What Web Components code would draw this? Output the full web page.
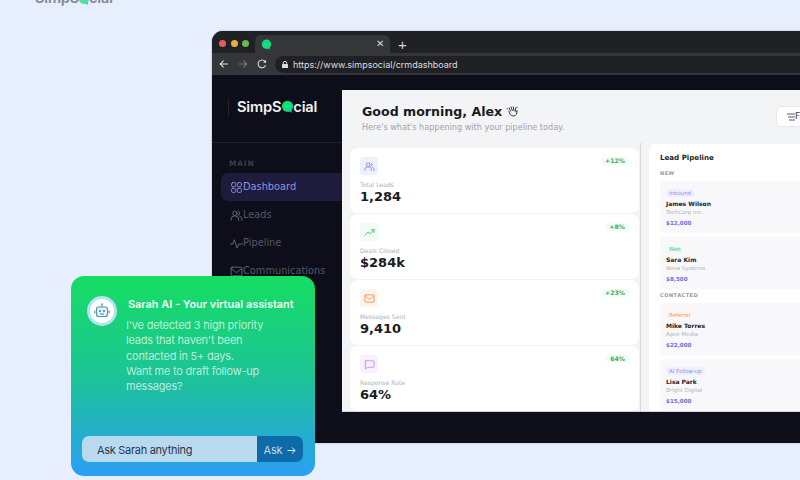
<!DOCTYPE html>
<html lang="en">
<head>
<meta charset="utf-8">
<title>SimpSocial</title>
<style>
  html, body { margin: 0; height: 100%; overflow: hidden; background: #e7eefd; }
  body { font-family: "Inter", "Liberation Sans", sans-serif; }
  .stage { position: relative; width: 800px; height: 480px; overflow: hidden; display: flex; flex-direction: column; }
</style>
</head>
<body>
<div class="stage">
  <top-logo></top-logo>
  <browser-window>
    <app-sidebar></app-sidebar>
    <dash-main></dash-main>
  </browser-window>
  <sarah-widget></sarah-widget>
</div>

<script>
const ICONS = {
  grid: '<rect x="3" y="3" width="7.5" height="7.5" rx="2"/><rect x="13.5" y="3" width="7.5" height="7.5" rx="2"/><rect x="3" y="13.5" width="7.5" height="7.5" rx="2"/><rect x="13.5" y="13.5" width="7.5" height="7.5" rx="2"/>',
  users: '<circle cx="9" cy="8" r="4"/><path d="M2 21v-2a6 6 0 0 1 6-6h2a6 6 0 0 1 6 6v2"/><path d="M15 4.2a4 4 0 0 1 0 7.6"/><path d="M18 13.3a6 6 0 0 1 4 5.7v2"/>',
  pulse: '<path d="M1 13h4l3-8 5 15 3-7h7"/>',
  mail: '<rect x="2" y="4" width="20" height="16" rx="2"/><path d="M2.5 6.5 12 14l9.5-7.5"/>',
  trend: '<path d="M2 18l7-7 4 4 9-9"/><path d="M16 6h6v6"/>',
  chat: '<path d="M4 4h16a2 2 0 0 1 2 2v10a2 2 0 0 1-2 2H8l-5 4V6a2 2 0 0 1 1-2z"/>'
};

function svgIcon(name, size, color, sw) {
  return `<svg width="${size}" height="${size}" viewBox="0 0 24 24" fill="none" stroke="${color}" stroke-width="${sw || 2}" stroke-linecap="round" stroke-linejoin="round">${ICONS[name]}</svg>`;
}

// logo dot used in the tab, the sidebar and the clipped page logo
function bubble(size) {
  return `<svg width="${size}" height="${size}" viewBox="0 0 20 20"><path d="M10 17l7 2.6-1.4-7z" fill="#1d8fe0"/><circle cx="10" cy="9.6" r="8.6" fill="#14d97a"/><path d="M6.5 9.6h1M9.5 9.6h1M12.5 9.6h1" stroke="#c9f7de" stroke-width="1"/></svg>`;
}

class TopLogo extends HTMLElement {
  constructor() {
    super();
    this.attachShadow({mode:'open'});
    this.shadowRoot.innerHTML = `
      <style>
        :host { display: flex; align-items: center; height: 15px; margin: -9px 0 25px 35px; flex: none;
          font: 600 14.6px/15px "Inter", sans-serif; color: #5a5d6c; opacity: .7; letter-spacing: -.2px; }
        svg { margin: 0 -1px; }
      </style>
      SimpS${bubble(12)}cial`;
  }
}
customElements.define('top-logo', TopLogo);

class BrowserWindow extends HTMLElement {
  constructor() {
    super();
    this.attachShadow({mode:'open'});
    this.shadowRoot.innerHTML = `
      <style>
        :host { display: flex; flex-direction: column; flex: none; width: 640px; height: 412px; margin-left: 212px;
          background: #0d0e19; border-radius: 11px 0 0 11px; overflow: hidden; box-shadow: 0 0 2px rgba(30,40,70,.35); }
        .tabs { display: flex; align-items: flex-end; height: 22px; background: #202124; flex: none; }
        .dots { display: flex; gap: 4.5px; width: 43px; box-sizing: border-box; padding: 0 0 6px 7px; }
        .dots i { width: 7px; height: 7px; border-radius: 50%; }
        .tab { display: flex; align-items: center; justify-content: space-between; width: 135px; height: 18px; box-sizing: border-box;
          padding: 0 6px; background: #35363a; border-radius: 6px 6px 0 0; }
        .x { font: 10px/1 "Liberation Sans", sans-serif; color: #d6d7d9; }
        .plus { font: 300 15px/1 "Liberation Sans", sans-serif; color: #d6d7d9; margin: 0 0 1px 8px; }
        .bar { display: flex; align-items: center; height: 22px; background: #35363a; flex: none; padding-left: 7px; gap: 9px; }
        .bar svg { flex: none; }
        .url { display: flex; align-items: center; gap: 5px; flex: 1; height: 17px; background: #202124; border-radius: 9px; padding-left: 7px;
          font: 9px/1 "Inter", sans-serif; color: #dcdde0; margin-left: -1px; }
        .body { display: flex; flex: 1; min-height: 0; }
      </style>
      <div class="tabs">
        <div class="dots"><i style="background:#e2605a"></i><i style="background:#eab03f"></i><i style="background:#62bc50"></i></div>
        <div class="tab">${bubble(11)}<span class="x">✕</span></div>
        <span class="plus">+</span>
      </div>
      <div class="bar">
        <svg width="10" height="10" viewBox="0 0 12 12" fill="none" stroke="#dcdde0" stroke-width="1.3"><path d="M11 6H1.5M5.5 2 1.5 6l4 4"/></svg>
        <svg width="10" height="10" viewBox="0 0 12 12" fill="none" stroke="#77787c" stroke-width="1.3"><path d="M1 6h9.5M6.5 2l4 4-4 4"/></svg>
        <svg width="10" height="10" viewBox="0 0 12 12" fill="none" stroke="#dcdde0" stroke-width="1.3"><path d="M10.4 7.5A4.7 4.7 0 1 1 9.6 2.8L10.6 4"/><path d="M10.9 1v3.6H7.3z" fill="#dcdde0" stroke="none"/></svg>
        <div class="url">
          <svg width="6" height="7" viewBox="0 0 6 7"><rect y="3" width="6" height="4" rx=".6" fill="#dcdde0"/><path d="M1.3 3.2V2a1.7 1.7 0 0 1 3.4 0v1.2" fill="none" stroke="#dcdde0"/></svg>
          https://www.simpsocial/crmdashboard
        </div>
      </div>
      <div class="body"><slot></slot></div>`;
  }
}
customElements.define('browser-window', BrowserWindow);

class AppSidebar extends HTMLElement {
  constructor() {
    super();
    this.attachShadow({mode:'open'});
    const nav = [['grid','Dashboard',1],['users','Leads'],['pulse','Pipeline'],['mail','Communications']];
    this.shadowRoot.innerHTML = `
      <style>
        :host { display: block; flex: none; width: 130px; height: 100%; box-sizing: border-box; padding-top: 15px; overflow: hidden; }
        .brand { display: flex; align-items: center; height: 53px; box-sizing: border-box; padding: 0 0 18px 16px; gap: 8px;
          border-bottom: 1px solid #20212c; font: 600 14.7px/1 "Inter", sans-serif; color: #f1f2f4; letter-spacing: -.2px; }
        .brand b { font-weight: 600; display: flex; align-items: center; }
        .brand svg { margin: 0 -.5px; }
        .rule { width: 1px; height: 17px; background: #23242f; }
        .main { font: 700 7.5px/1 "DejaVu Sans", sans-serif; letter-spacing: .8px; color: #3c3d4b; padding: 17px 0 0 17px; height: 13px; }
        nav { display: flex; flex-direction: column; padding: 0 0 0 9px; }
        a { display: flex; align-items: center; height: 28px; padding-left: 9px; font: 9.8px/1 "DejaVu Sans", sans-serif;
          color: #565868; white-space: nowrap; }
        a.on { color: #8f93e0; background: #1e1b3c; border-radius: 7px 0 0 7px; }
      </style>
      <div class="brand"><span class="rule"></span><b>SimpS${bubble(13)}cial</b></div>
      <div class="main">MAIN</div>
      <nav>${nav.map(n => `<a class="${n[2] ? 'on' : ''}">${svgIcon(n[0], 13, n[2] ? '#8f93e0' : '#6a6c7c', 1.7)}${n[1]}</a>`).join('')}</nav>`;
  }
}
customElements.define('app-sidebar', AppSidebar);

class StatCard extends HTMLElement {
  connectedCallback() {
    const g = k => this.getAttribute(k) || '';
    this.attachShadow({mode:'open'});
    this.shadowRoot.innerHTML = `
      <style>
        :host { display: flex; justify-content: space-between; flex: none; height: 65px; box-sizing: border-box; padding: 9px 10px;
          background: #fff; border-radius: 7px; box-shadow: 0 0 1px rgba(0,0,0,.06); }
        .ic { display: flex; align-items: center; justify-content: center; width: 18px; height: 18px; border-radius: 4px; background: ${g('tint')}; margin-bottom: 5px; }
        .l { font: 6.1px/9px "DejaVu Sans", sans-serif; color: #b0b1b4; }
        .v { font: 700 13px/15px "DejaVu Sans", sans-serif; color: #1b1b1f; }
        .d { align-self: flex-start; font: 700 6.2px/8px "DejaVu Sans", sans-serif; color: #3cab69; background: #f0fcf4; border-radius: 5px; padding: 0 4px; }
      </style>
      <div>
        <div class="ic">${svgIcon(g('icon'), 11, g('stroke'), 1.8)}</div>
        <div class="l">${g('label')}</div>
        <div class="v">${g('value')}</div>
      </div>
      <span class="d">${g('delta')}</span>`;
  }
}
customElements.define('stat-card', StatCard);

class LeadCard extends HTMLElement {
  connectedCallback() {
    const g = k => this.getAttribute(k) || '';
    this.attachShadow({mode:'open'});
    this.shadowRoot.innerHTML = `
      <style>
        :host { display: block; flex: none; height: 52px; box-sizing: border-box; padding: 8px 6px; background: #f8f8fa; border-radius: 6px; }
        .tag { display: inline-block; font: 5.4px/8px "DejaVu Sans", sans-serif; padding: 0 3px; border-radius: 3px; color: ${g('color')}; background: ${g('bg')}; height: 8px; vertical-align: top; }
        .n { font: 700 6px/9px "DejaVu Sans", sans-serif; color: #232328; margin-top: 1.5px; }
        .c { font: 5.5px/9px "DejaVu Sans", sans-serif; color: #b3b4b8; }
        .a { font: 700 5.6px/9px "DejaVu Sans", sans-serif; color: #6c6fe0; margin-top: 2px; }
      </style>
      <div style="height:8px"><span class="tag">${g('tag')}</span></div>
      <div class="n">${g('name')}</div>
      <div class="c">${g('company')}</div>
      <div class="a">${g('amount')}</div>`;
  }
}
customElements.define('lead-card', LeadCard);

class DashMain extends HTMLElement {
  constructor() {
    super();
    this.attachShadow({mode:'open'});
    this.shadowRoot.innerHTML = `
      <style>
        :host { display: flex; flex-direction: column; width: 510px; flex: none; height: 321px; margin-top: 15px; background: #f3f4f6; box-shadow: 0 1px 0 #d5d6da; overflow: hidden; }
        header { display: flex; justify-content: space-between; align-items: center; height: 53px; flex: none; box-sizing: border-box; padding: 2px 0 0 20px; }
        h1 { display: flex; align-items: center; gap: 4px; margin: 0; font: 700 12.6px/17px "DejaVu Sans", sans-serif; color: #1b1b1f; }
        p { margin: 2px 0 0; font: 8.1px/11px "DejaVu Sans", sans-serif; color: #a2a3a8; }
        .filter { display: flex; align-items: center; gap: 0; width: 60px; height: 21px; flex: none; box-sizing: border-box; padding-left: 10px; margin: -2px 16px 0 0;
          background: #fff; border: 1px solid #e6e7ea; border-radius: 6px; font: 9px/1 "DejaVu Sans", sans-serif; color: #3a3a40; }
        .cols { display: flex; flex: 1; min-height: 0; }
        .stats { display: flex; flex-direction: column; gap: 1px; width: 299px; height: 268px; flex: none; box-sizing: border-box; padding: 5px 1px 0 8px; border-right: 1px solid #d6d7da; }
        .pipe { flex: none; width: 203px; box-sizing: border-box; margin: 1px 0 0 8px; padding: 9px 11px; background: #fff; border-radius: 7px 0 0 0; display: flex; flex-direction: column; }
        h2 { margin: 0; font: 700 7.1px/10px "DejaVu Sans", sans-serif; color: #1f1f24; }
        h3 { margin: 7px 0 4px; font: 700 5px/7px "DejaVu Sans", sans-serif; color: #96979c; letter-spacing: .5px; }
        h3.second { margin: 3px 0 4px; }
        .leads { display: flex; flex-direction: column; gap: 4px; }
      </style>
      <header>
        <div>
          <h1>Good morning, Alex
            <svg width="13" height="12" viewBox="0 0 13 12" fill="none" stroke="#3d3d44" stroke-width="1"><path d="M3 2.5l1.6 4M5 1.5l1.4 4.5M7.2 1.5l.8 4.5M9.6 2.5 9.2 6.5"/><path d="M2.8 6c.6 3 2 5 4.8 5 2.4 0 3.4-2.2 3.6-5.4L9.2 7"/><path d="M.8 3 1.8 4.4M11.4 1.8l-.8 1.4"/></svg>
          </h1>
          <p>Here's what's happening with your pipeline today.</p>
        </div>
        <span class="filter">
          <svg width="8" height="8" viewBox="0 0 8 8" stroke="#5a5a60" stroke-width="1"><path d="M0 1h8M1 4h7M2 7h6"/></svg>Filter
        </span>
      </header>
      <div class="cols">
        <section class="stats">
          <stat-card icon="users" tint="#eff0ff" stroke="#8285ea" label="Total Leads" value="1,284" delta="+12%"></stat-card>
          <stat-card icon="trend" tint="#effbf3" stroke="#3cb46d" label="Deals Closed" value="$284k" delta="+8%"></stat-card>
          <stat-card icon="mail" tint="#fff4ea" stroke="#ee8a50" label="Messages Sent" value="9,410" delta="+23%"></stat-card>
          <stat-card icon="chat" tint="#f9f0ff" stroke="#b884ee" label="Response Rate" value="64%" delta="64%"></stat-card>
        </section>
        <section class="pipe">
          <h2>Lead Pipeline</h2>
          <h3>NEW</h3>
          <div class="leads">
            <lead-card tag="Inbound" color="#8a8df0" bg="#eff0ff" name="James Wilson" company="TechCorp Inc." amount="$12,000"></lead-card>
            <lead-card tag="Web" color="#4fc27c" bg="#effbf3" name="Sara Kim" company="Nova Systems" amount="$8,500"></lead-card>
          </div>
          <h3 class="second">CONTACTED</h3>
          <div class="leads">
            <lead-card tag="Referral" color="#ef9a5c" bg="#fff6ee" name="Mike Torres" company="Apex Media" amount="$22,000"></lead-card>
            <lead-card tag="AI Follow-up" color="#8a8df0" bg="#eff0ff" name="Lisa Park" company="Bright Digital" amount="$15,000"></lead-card>
          </div>
        </section>
      </div>`;
  }
}
customElements.define('dash-main', DashMain);

class SarahWidget extends HTMLElement {
  constructor() {
    super();
    this.attachShadow({mode:'open'});
    this.shadowRoot.innerHTML = `
      <style>
        /* floats over the browser window */
        :host { position: absolute; left: 71px; top: 276px; width: 244px; height: 200px; box-sizing: border-box; padding: 20px 12px 14px 16px;
          display: flex; flex-direction: column; border-radius: 13px; background: linear-gradient(180deg, #16dd62 0%, #1cc496 50%, #2a9ff3 100%); font-family: "Inter", sans-serif; }
        .top { display: flex; gap: 9px; flex: 1; }
        .av { flex: none; display: flex; align-items: center; justify-content: center; width: 30px; height: 30px; box-sizing: border-box; border-radius: 50%; background: #fff; border: 3px solid #b5e3f5; }
        h4 { margin: 1px 0 6px 2px; font: 600 10.9px/15px "Inter", sans-serif; color: #f4fff9; white-space: nowrap; }
        p { margin: 0; font: 400 11px/15.3px "Inter", sans-serif; letter-spacing: -.22px; color: rgba(255,255,255,.7); width: 170px; }
        form { display: flex; height: 26px; margin: 0 0 0 -5px; flex: none; border-radius: 7px; overflow: hidden; }
        .in { flex: 1; display: flex; align-items: center; padding: 2px 0 0 15px; background: #b9daee; font: 400 11px/1 "Inter", sans-serif; letter-spacing: -.3px; color: #24384f; }
        .ask { display: flex; align-items: center; justify-content: center; gap: 5px; width: 46px; padding-top: 2px; box-sizing: border-box; background: #0f6aa8; font: 400 11px/1 "Inter", sans-serif; letter-spacing: -.2px; color: #bcdcf0; }
      </style>
      <div class="top">
        <div class="av">
          <svg width="18" height="18" viewBox="0 0 18 18" fill="none" stroke="#5b8fb0" stroke-width="1.1"><rect x="3.5" y="5" width="11" height="9.5" rx="2" fill="#dff1fb"/><path d="M9 5V2.8"/><circle cx="9" cy="2.2" r=".9" fill="#5b8fb0" stroke="none"/><path d="M1.8 8.5v3M16.2 8.5v3"/><circle cx="7" cy="9" r=".9" fill="#3c6c90" stroke="none"/><circle cx="11" cy="9" r=".9" fill="#3c6c90" stroke="none"/><path d="M7 12h4"/></svg>
        </div>
        <div>
          <h4>Sarah AI - Your virtual assistant</h4>
          <p>I've detected 3 high priority<br>leads that haven't been<br>contacted in 5+ days.<br>Want me to draft follow-up<br>messages?</p>
        </div>
      </div>
      <form>
        <div class="in">Ask Sarah anything</div>
        <div class="ask">Ask <svg width="9" height="9" viewBox="0 0 10 9" fill="none" stroke="#dcedf7" stroke-width="1.1"><path d="M.5 4.5h8.5M5.5 1 9 4.5 5.5 8"/></svg></div>
      </form>`;
  }
}
customElements.define('sarah-widget', SarahWidget);
</script>
</body>
</html>
